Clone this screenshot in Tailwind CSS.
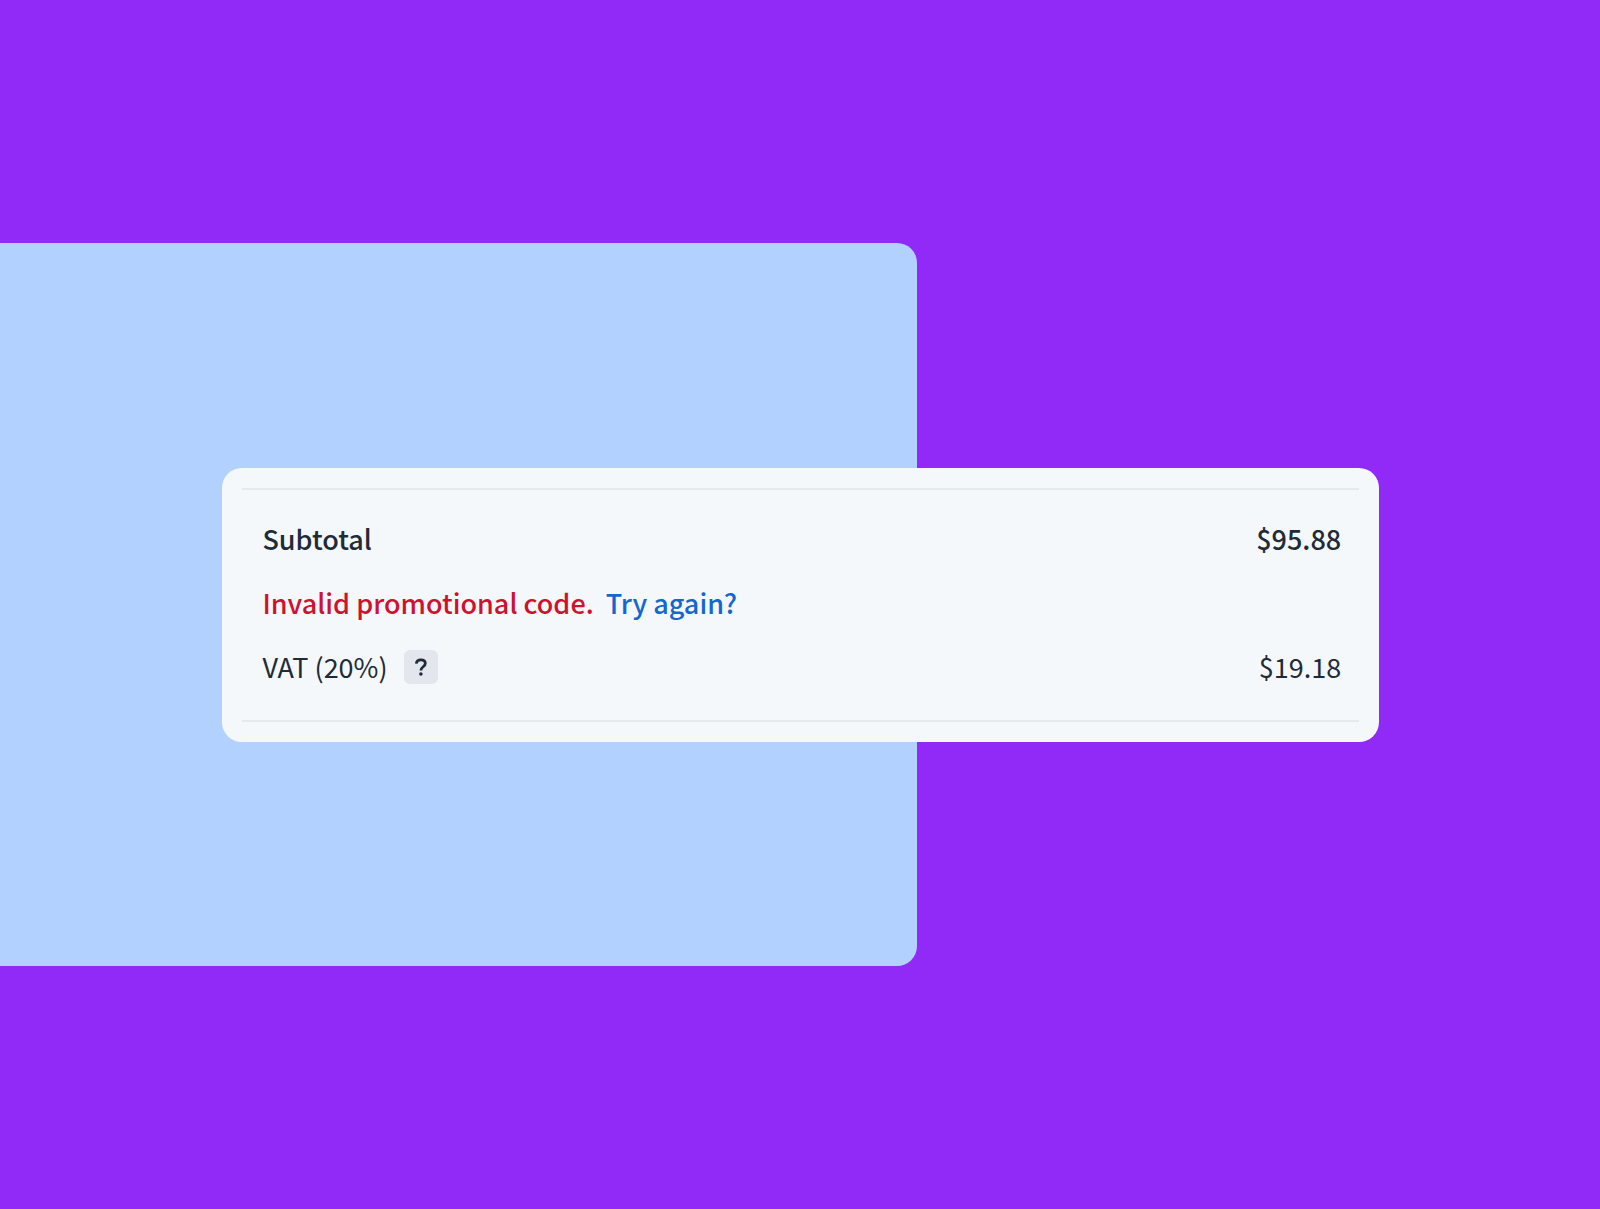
<!DOCTYPE html>
<html lang="en">
<head>
    <meta charset="UTF-8">
    <meta name="viewport" content="width=device-width, initial-scale=1.0">
    <title>Order Summary</title>
    <script src="https://cdn.jsdelivr.net/npm/@tailwindcss/browser@4"></script>
</head>
<body class="bg-[#9129f7] font-['Noto_Sans_CJK_SC','Noto_Sans',sans-serif] text-[#212b38]">
    <main class="grid min-h-screen items-center">
        <!-- Backdrop panel -->
        <div class="col-start-1 row-start-1 h-[59.8vh] w-[57.3%] rounded-r-[20px] bg-[#b3d1ff]"></div>

        <!-- Order summary -->
        <section class="col-start-1 row-start-1 ml-[13.9%] w-[72.3%] rounded-[20px] bg-[#f5f8fb] p-5" aria-label="Order summary">
            <div class="border-y-2 border-[#e6e9ef] pt-[17px] pr-[18px] pb-[21px] pl-5 text-[27px] leading-8">
                <div class="flex h-16 items-center justify-between font-medium">
                    <span>Subtotal</span>
                    <span>$95.88</span>
                </div>
                <div class="flex h-16 items-center gap-3 font-medium">
                    <p class="text-[#cf1130]">Invalid promotional code.</p>
                    <a href="#promo" class="text-[#1367cf] hover:underline">Try again?</a>
                </div>
                <div class="flex h-16 items-center justify-between">
                    <div class="flex items-center gap-4">
                        <span>VAT (20%)</span>
                        <button type="button" class="flex size-[34px] items-center justify-center rounded-md bg-[#e3e6ed]" aria-label="About VAT">
                            <svg class="size-5" viewBox="0 0 20 20" fill="none" stroke="currentColor" stroke-width="2.800">
                                <path d="M5.300 6.600C5.600 4.200 7.400 2.900 9.900 2.900c2.700 0 4.400 1.500 4.400 3.700 0 3.100-4.400 3.300-4.400 6.800" />
                                <circle cx="9.900" cy="17" r="1.800" fill="currentColor" stroke="none" />
                            </svg>
                        </button>
                    </div>
                    <span>$19.18</span>
                </div>
            </div>
        </section>
    </main>
</body>
</html>
